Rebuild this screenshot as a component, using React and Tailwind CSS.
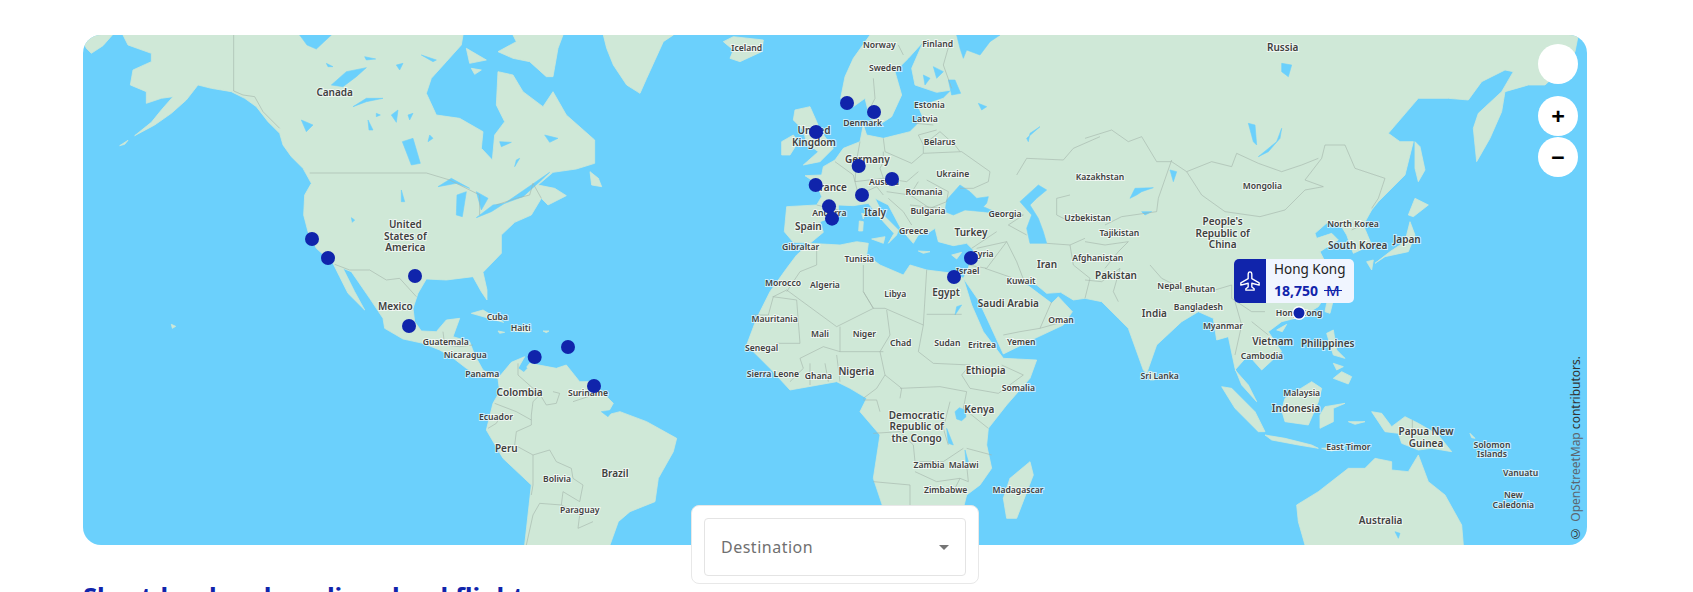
const LAND = "#cfe8d7";
const WATER = "#6bd0fc";
const LINE = "#a2b4a9";

// traced in 3x crop coordinates, each group has its own origin
const landA = [
  "0,18 20,0 88,0 60,32 25,55 10,40",
  "120,0 135,30 205,55 205,80 150,105 142,150 190,170 190,205 235,190 270,185 235,225 205,262 155,302 215,270 265,235 310,195 345,150 385,160 445,170 485,190 520,215 555,260 590,295 600,330 625,365 660,400 685,445 665,480 662,540 675,590 700,640 750,685 770,725 795,775 845,825 815,770 780,700 805,710 860,790 900,850 905,880 960,912 1020,925 1070,945 1105,965 1150,1000 1190,1025 1245,1030 1200,1005 1175,960 1160,920 1110,905 1130,850 1090,855 1060,890 1015,888 995,860 990,820 1005,775 1030,732 1090,735 1170,725 1195,770 1212,795 1212,765 1200,712 1255,655 1255,600 1295,562 1345,540 1375,490 1395,510 1450,482 1415,460 1365,450 1410,412 1480,402 1535,385 1535,315 1450,240 1410,170 1380,215 1320,170 1290,120 1245,110 1240,210 1265,260 1235,300 1228,375 1195,340 1200,290 1130,250 1060,240 1030,175 1045,130 1090,80 1135,30 1140,0",
  "1245,50 1300,20 1290,0 1440,0 1425,40 1410,125 1390,125 1340,80 1290,70",
  "1150,40 1210,75 1160,85",
  "1165,100 1195,105 1175,118",
  "1165,835 1200,825 1262,862 1225,852",
  "1285,878 1345,882 1340,892 1295,888",
  "1245,888 1265,892 1250,895",
  "1380,888 1398,888 1390,893",
  "265,868 278,874 268,880",
  "110,332 135,316 125,328",
  "1245,1030 1285,982 1325,965 1305,1000 1320,1010 1340,985 1420,1000 1450,990 1490,1040 1530,1040 1561,1075 1591,1105 1571,1140 1611,1130 1691,1160 1781,1210 1771,1250 1726,1330 1716,1400 1641,1430 1606,1460 1581,1530 1325,1530 1345,1350 1260,1270 1210,1185 1230,1105 1250,1070",
];

const waterA = [
  "650,0 745,0 700,42 672,30",
  "745,150 790,110 850,98 820,125 780,155",
  "810,215 850,190 900,190 850,200",
  "958,320 990,310 1012,385 985,390",
  "925,240 945,225 940,262",
  "855,255 870,285 858,285",
  "1065,455 1105,430 1160,460 1120,445",
  "1120,540 1122,480 1150,470 1138,545",
  "1180,470 1215,490 1195,525",
  "1180,548 1230,510 1265,505 1225,530",
  "1265,505 1345,450 1400,412 1370,440 1320,485",
  "1015,60 1060,75 1050,80",
  "845,65 878,72 850,75",
  "940,90 960,85 950,105",
  "1250,320 1285,322 1255,335",
  "1385,300 1425,310 1400,322",
  "1320,985 1332,1000 1322,1010",
  "730,85 750,95 735,95",
  "1555,1130 1591,1125 1575,1145",
  "655,255 690,270 670,290",
  "975,240 990,235 980,255",
  "880,235 892,240 880,245",
  "1040,300 1050,310 1035,320",
  "1300,375 1310,370 1295,395",
  "955,465 965,500 955,500",
  "805,548 815,555 808,562",
];

const bordersA = [
  "452,0 452,168 480,180 515,185 540,230 590,280",
  "680,414 1030,414 1100,435 1160,465 1190,480 1190,540",
  "1240,510 1300,490 1340,480 1350,445 1375,490",
  "755,688 800,705 860,705 910,735 950,730 1000,785",
  "1080,890 1085,930 1130,935 1170,930",
  "1305,985 1305,1020 1350,1060 1375,1075 1350,1100 1345,1140 1345,1170 1300,1190 1295,1230 1350,1260 1350,1350 1345,1380",
  "1375,1085 1390,1110 1420,1105 1430,1075 1410,1070",
  "1470,1100 1530,1080",
  "1235,1105 1300,1130 1345,1155",
  "1215,1180 1240,1165 1260,1130",
  "1350,1260 1400,1245 1420,1280 1465,1300 1470,1330 1500,1350 1490,1400 1440,1370 1435,1410 1370,1405 1350,1440 1330,1530",
  "1435,1410 1490,1440 1485,1480 1530,1460",
];

const landB = [
  "40,0 250,0 220,20 170,130 150,175 110,150 70,90 50,40",
  "400,20 430,5 520,15 515,50 450,80 420,70 430,45",
  "0,410 25,430 35,455 5,450",
  "575,360 575,320 610,300 625,320 600,360",
  "615,225 660,215 680,260 690,285 730,340 690,380 640,390 685,350 650,325 640,285 610,255",
  "840,0 790,70 765,125 752,190 790,215 825,190 840,250 870,268 905,245 935,180 915,110 955,70 1000,20 965,100 975,150 1040,172 1085,165 1060,190 985,215 1000,250 960,290 880,310 830,300 820,270 810,320 760,340 735,375 700,395 695,420 645,422 680,445 695,485 680,510 590,515 583,590 610,622 660,625 700,592 690,560 745,540 745,510 790,512 835,505 880,560 912,595 895,625 920,600 925,585 880,540 855,490 895,510 935,585 970,625 985,600 1020,590 1035,580 1045,620 1090,632 1130,625 1150,645 1135,700 1120,730 1165,795 1200,870 1240,957 1335,910 1420,870 1447,830 1405,785 1385,805 1345,775 1305,745 1340,750 1370,775 1412,772 1450,795 1485,790 1535,800 1585,850 1615,880 1660,1005 1670,1015 1700,930 1775,860 1825,830 1870,850 1880,915 1915,905 1935,1000 1955,1050 2000,1100 1975,1050 1935,1005 1975,960 2015,1005 2075,950 2035,890 2075,860 2135,845 2185,815 2235,740 2190,650 2245,615 2225,595 2180,610 2175,595 2215,560 2255,575 2270,600 2290,655 2345,630 2320,570 2345,525 2365,500 2445,420 2470,320 2430,320 2395,295 2485,190 2575,190 2635,195 2675,140 2745,105 2770,110 2735,170 2665,235 2650,280 2660,380 2700,310 2735,230 2745,170 2815,150 2865,150 2925,95 2955,50 2965,0",
  "660,625 750,630 800,620 835,625 830,660 870,690 940,720 960,690 1010,705 1090,715 1120,730 1145,810 1180,890 1240,970 1340,975 1320,1030 1250,1110 1195,1180 1190,1230 1205,1300 1170,1350 1130,1380 1120,1420 880,1420 850,1330 870,1200 810,1130 830,1090 780,1060 740,1040 600,1065 540,1000 470,930 500,850 540,770 590,700 620,660",
  "1320,1280 1330,1320 1280,1450 1250,1450 1240,1390 1260,1330",
  "808,558 820,560 818,588 806,588",
  "815,535 824,537 820,552",
  "845,612 885,605 880,625",
  "985,648 1020,650 1000,655",
  "1085,660 1115,652 1100,672",
];

const waterB = [
  "1100,0 1230,0 1200,20 1170,60 1130,45 1120,70 1110,40",
  "1065,530 1070,495 1110,450 1140,470 1160,490 1195,485 1190,505 1180,515 1225,535 1180,530 1125,525 1090,540",
  "1290,500 1345,450 1370,465 1340,490 1320,510 1345,550 1360,590 1370,625 1320,625 1310,580 1325,540",
  "1075,135 1095,135 1112,175 1085,180",
  "1030,95 1060,110 1040,130",
  "1000,120 1020,130 1005,150",
  "1165,205 1190,215 1175,225",
  "1310,310 1350,275 1320,295 1315,320",
  "1095,1130 1108,1118 1125,1125 1128,1145 1115,1157 1100,1152",
  "1070,1180 1090,1230 1075,1225",
  "1125,1245 1135,1280 1128,1285",
  "1100,815 1115,810 1095,840",
];

const bordersB = [
  "850,130 855,190 835,230",
  "940,60 925,30",
  "1080,20 1060,90 1085,160",
  "985,215 1040,220",
  "975,265 1030,270",
  "985,300 1040,285",
  "1000,330 1050,290 1095,330 1110,350",
  "1000,355 1115,350 1200,410 1195,440 1150,460 1110,460",
  "880,310 885,350 965,385 1000,355 1000,330 985,300",
  "810,320 800,375 795,440 880,430 870,400 880,380 880,350",
  "735,380 790,420 795,440 805,480",
  "680,510 745,525",
  "805,480 860,455 880,480",
  "880,430 950,440 985,410",
  "890,470 960,480 985,440",
  "960,480 1020,520 1070,500 1075,470 1010,435",
  "960,510 1050,520",
  "895,490 940,530 965,570",
  "1220,590 1145,640",
  "1160,640 1250,620 1190,700 1135,690",
  "1250,620 1280,680 1305,745",
  "1215,530 1300,540 1255,570 1310,600",
  "1370,625 1440,630 1485,610",
  "1185,700 1300,740",
  "1350,880 1385,800",
  "1240,900 1290,890 1350,880 1420,860",
  "1280,420 1310,370 1420,375 1450,340 1530,305",
  "1440,480 1400,490 1400,540 1440,560",
  "1440,630 1450,690 1500,730 1485,790",
  "680,640 680,690 630,710 590,770",
  "590,765 550,785 535,840 490,840",
  "548,785 620,795 630,925 560,925",
  "590,765 740,875 850,820 820,770 820,690",
  "820,770 850,820 885,820 1000,870 1010,705",
  "1010,838 1115,838",
  "890,825 900,900 870,950 885,1020",
  "1000,870 985,950 1030,985 1140,990",
  "750,950 880,950",
  "750,875 750,950 700,935 630,970 640,1000 600,1040",
  "740,960 750,1040",
  "660,985 660,1050",
  "705,985 715,1040",
  "885,1020 860,1060 820,1090",
  "885,1020 935,1060 930,1090",
  "930,1060 1050,1055 1130,1070",
  "1080,1100 1060,1180 1075,1230",
  "1130,1070 1120,1120 1195,1180",
  "1140,990 1115,1020 1140,1060 1225,1075 1300,1020 1235,990",
  "820,1095 860,1095 870,1130",
  "850,1195 930,1190 970,1230 975,1280 1060,1280 1120,1240",
  "850,1340 960,1350 960,1410",
  "1130,1290 1135,1340 1110,1330 1090,1370",
  "975,1310 1040,1340 1110,1330",
  "1205,1260 1130,1240",
];

const landC = [
  "725,805 745,795 735,835 720,830",
  "575,885 605,868 592,890",
  "725,895 745,885 755,945 780,970 745,960",
  "770,1010 800,1025 790,1047 745,1030",
  "745,985 775,995 755,1005",
  "410,1055 440,1060 510,1130 540,1190 520,1190 450,1120",
  "540,1200 600,1210 680,1230 700,1240 640,1230 560,1215",
  "600,1090 680,1040 710,1060 700,1100 670,1170 600,1160 590,1125",
  "720,1115 780,1105 745,1120 745,1160 705,1180 705,1140",
  "790,1160 840,1160 810,1168",
  "710,1240 780,1235 740,1248",
  "860,1130 890,1135 920,1175 960,1145 1000,1165 1060,1200 1100,1250 1040,1240 1000,1245 950,1225 940,1195 900,1190",
  "635,1410 700,1370 790,1300 840,1300 870,1270 920,1280 920,1305 970,1310 1000,1260 1030,1340 1080,1380 1130,1470 1135,1530 660,1530 640,1460",
  "1155,1195 1170,1210 1160,1208",
  "190,1010 205,1012 208,1035 195,1035",
  "990,320 1005,335 1020,405 1000,440 990,400",
  "970,540 990,490 1030,510 985,545",
  "975,560 990,600 970,650 900,665 870,685 915,650 960,620",
  "845,680 865,675 860,705",
];

const waterC = [
  "135,490 150,460 205,458 170,470 155,480",
  "520,365 575,320 590,280 585,310 550,350",
  "490,265 510,270 515,330 505,320",
  "590,85 620,90 610,125 590,110",
  "255,405 275,410 265,440",
  "170,530 200,530 180,540",
  "930,1490 945,1495 940,1510",
];

const bordersC = [
  "0,310 80,285 130,320 170,305 215,380 260,380 305,410",
  "305,410 350,480 420,530 525,545 600,525 660,465 715,455 660,435 710,370 720,330 780,330 810,400 900,430 880,490 860,520",
  "305,410 380,380 440,395 455,355 520,385 590,410 650,390 700,370",
  "260,375 220,490 215,530 110,545 60,570",
  "0,620 60,630 130,620 100,650 60,700",
  "0,735 50,740 105,700 85,770 100,800",
  "195,690 230,730 290,760 300,775",
  "390,765 440,750 440,790 500,830 540,830",
  "500,860 550,900",
  "450,800 470,870 450,960",
  "982,1155 982,1200",
  "800,585 850,560",
];

const labelsA = [
  ["Canada", 755, 173, 1], ["United", 967, 569, 1], ["States of", 967, 603, 1], ["America", 967, 638, 1],
  ["Mexico", 937, 814, 1], ["Cuba", 1243, 846], ["Haiti", 1313, 880], ["Guatemala", 1088, 922],
  ["Nicaragua", 1147, 960], ["Panama", 1198, 1017], ["Colombia", 1310, 1071, 1], ["Ecuador", 1239, 1145],
  ["Peru", 1270, 1240, 1], ["Bolivia", 1422, 1331], ["Paraguay", 1490, 1426], ["Suriname", 1515, 1073],
];

const labelsB = [
  ["Brazil", 75, 1314, 1], ["Iceland", 470, 40], ["Norway", 868, 30], ["Finland", 1043, 27], ["Sweden", 886, 98],
  ["Estonia", 1018, 211], ["Latvia", 1005, 251], ["Denmark", 818, 264], ["United", 672, 287, 1], ["Kingdom", 672, 321, 1],
  ["Belarus", 1049, 320], ["Germany", 832, 373, 1], ["Ukraine", 1088, 418], ["Austria", 882, 440], ["France", 722, 456, 1],
  ["Romania", 1002, 472], ["Italy", 855, 531, 1], ["Bulgaria", 1014, 529], ["Andorra", 718, 533], ["Spain", 655, 575, 1],
  ["Greece", 971, 589], ["Georgia", 1245, 537], ["Turkey", 1143, 591, 1], ["Gibraltar", 632, 637], ["Tunisia", 808, 671],
  ["Syria", 1180, 656], ["Israel", 1133, 707], ["Libya", 916, 777], ["Morocco", 579, 744], ["Algeria", 705, 751],
  ["Egypt", 1068, 773, 1], ["Saudi Arabia", 1255, 806, 1], ["Kuwait", 1293, 738], ["Iran", 1371, 688, 1], ["Oman", 1413, 855],
  ["Mauritania", 554, 851], ["Mali", 690, 897], ["Niger", 823, 898], ["Chad", 932, 925], ["Sudan", 1072, 925],
  ["Eritrea", 1176, 930], ["Yemen", 1294, 922], ["Senegal", 515, 940], ["Sierra Leone", 549, 1016], ["Ghana", 685, 1022],
  ["Nigeria", 799, 1009, 1], ["Ethiopia", 1187, 1007, 1], ["Somalia", 1285, 1058], ["Kenya", 1168, 1122, 1],
  ["Democratic", 980, 1141, 1], ["Republic of", 980, 1175, 1], ["the Congo", 980, 1209, 1], ["Zambia", 1017, 1289],
  ["Malawi", 1121, 1290], ["Zimbabwe", 1067, 1366], ["Madagascar", 1284, 1365],
];

const labelsC = [
  ["Russia", 593, 38, 1], ["Kazakhstan", 45, 425], ["Uzbekistan", 8, 550], ["Tajikistan", 103, 593], ["Afghanistan", 38, 669],
  ["Pakistan", 93, 720, 1], ["Mongolia", 532, 452], ["People's", 413, 560, 1], ["Republic of", 413, 594, 1], ["China", 413, 628, 1],
  ["North Korea", 804, 568], ["South Korea", 818, 631, 1], ["Japan", 966, 614, 1], ["Nepal", 254, 752], ["Bhutan", 345, 763],
  ["India", 208, 834, 1], ["Bangladesh", 340, 817], ["Myanmar", 414, 873], ["Vietnam", 563, 918, 1], ["Philippines", 728, 925, 1],
  ["Cambodia", 531, 964], ["Sri Lanka", 224, 1023], ["Hong Kong", 642, 835], ["Malaysia", 650, 1074], ["Indonesia", 633, 1121, 1],
  ["East Timor", 790, 1235], ["Papua New", 1023, 1190, 1], ["Guinea", 1023, 1224, 1], ["Solomon", 1221, 1229], ["Islands", 1221, 1258],
  ["Vanuatu", 1307, 1315], ["New", 1285, 1381], ["Caledonia", 1285, 1410], ["Australia", 887, 1457, 1],
];

const pins = [
  [83, 687, 612], [83, 735, 669], [83, 996, 723], [83, 978, 873], [83, 1355, 966], [83, 1455, 936],
  [590, 12, 1053], [590, 771, 204], [590, 852, 231], [590, 678, 291], [590, 806, 393], [590, 906, 432],
  [590, 677, 450], [590, 816, 480], [590, 717, 514], [590, 726, 551], [590, 1143, 669], [590, 1092, 726],
];

function Layer({ x, land, water, borders }) {
  return (
    <g transform={`translate(${x},35) scale(0.33333)`}>
      {land.map((p, i) => (
        <polygon key={i} points={p} fill={LAND} stroke={LAND} strokeWidth="0.8" strokeLinejoin="round" vectorEffect="non-scaling-stroke" />
      ))}
      {water.map((p, i) => (
        <polygon key={i} points={p} fill={WATER} stroke={WATER} strokeWidth="0.6" strokeLinejoin="round" vectorEffect="non-scaling-stroke" />
      ))}
      {borders.map((p, i) => (
        <polyline key={i} points={p} fill="none" stroke={LINE} strokeWidth="0.6" vectorEffect="non-scaling-stroke" />
      ))}
    </g>
  );
}

function Labels({ x, items }) {
  return items.map(([text, lx, ly, big]) => (
    <text
      key={text + lx}
      x={x + lx / 3}
      y={35 + ly / 3 + (big ? 3.5 : 3)}
      textAnchor="middle"
      fontSize={big ? 10 : 8.6}
      fontWeight="600"
      fill="#404040"
      stroke="#ffffff"
      strokeOpacity="0.65"
      strokeWidth="2"
      paintOrder="stroke"
      fontFamily="'Noto Sans', sans-serif"
    >
      {text}
    </text>
  ));
}

function WorldMap() {
  return (
    <svg className="block w-full h-full" viewBox="83 35 1504 510">
      <Layer x={83} land={landA} water={waterA} borders={bordersA} />
      <Layer x={590} land={landB} water={waterB} borders={bordersB} />
      <Layer x={1085} land={landC} water={waterC} borders={bordersC} />
      <Labels x={83} items={labelsA} />
      <Labels x={590} items={labelsB} />
      <Labels x={1085} items={labelsC} />
      {pins.map(([x0, x, y], i) => (
        <circle key={i} cx={x0 + x / 3} cy={35 + y / 3} r="7" fill="#1024ab" />
      ))}
      <circle cx={1299} cy={313} r="6.2" fill="#1024ab" stroke="#ffffff" strokeWidth="1.4" />
    </svg>
  );
}

function PlaneIcon() {
  return (
    <svg width="22" height="22" viewBox="0 0 24 24" fill="none" stroke="white" strokeWidth="1.5" strokeLinejoin="round">
      <path d="M12 2c1.2 0 2 1.5 2 3v4.500l8 4.500v2.500l-8-2v4l2.500 2v1.500h-9V20.500l2.500-2v-4l-8 2V14l8-4.500V5c0-1.500.8-3 2-3z" />
    </svg>
  );
}

export default function App() {
  return (
    <div className="w-[1693px] h-[592px] overflow-hidden bg-white font-['Noto_Sans',sans-serif]">
      <div className="relative ml-[83px] mt-[35px] w-[1504px] h-[510px] inline-block overflow-hidden rounded-[18px] bg-[#6bd0fc] align-top">
        <WorldMap />

        <div className="absolute top-[9px] right-[9px] flex flex-col">
          <button className="w-10 h-10 rounded-full bg-white mb-3"></button>
          <button className="w-10 h-10 rounded-full bg-white mb-px flex items-center justify-center text-[24px] leading-none font-bold text-black">+</button>
          <button className="w-10 h-10 rounded-full bg-white flex items-center justify-center text-[24px] leading-none font-bold text-black">−</button>
        </div>

        <div className="absolute left-[1151px] top-[224px] flex h-11 w-[120px] overflow-hidden rounded-[5px] bg-[#f0f5ff]">
          <div className="flex w-8 items-center justify-center bg-[#1024ab]">
            <PlaneIcon />
          </div>
          <div className="pl-2">
            <div className="text-[13.500px] leading-[21px] text-[#222222]">Hong Kong</div>
            <div className="flex items-center text-[14px] leading-[21px] font-bold text-[#1024ab]">
              18,750
              <span className="relative ml-2 font-medium text-[15px]">
                M
                <span className="absolute left-[-2px] right-[-2px] top-[10px] h-px bg-[#1024ab]"></span>
              </span>
            </div>
          </div>
        </div>

        <div className="absolute bottom-[3px] right-[3px] rotate-180 text-[12px] leading-4 text-[#333333] [writing-mode:vertical-rl]">
          © <span className="text-[#5b6670]">OpenStreetMap</span> contributors.
        </div>
      </div>

      <div className="relative z-10 ml-[691px] -mt-10 w-[288px] h-[79px] rounded-lg border border-[#e8e8e8] bg-white p-3">
        <div className="flex h-[58px] items-center justify-between rounded border border-[#e4e4e4] pl-4 pr-4">
          <span className="text-[16px] tracking-[0.5px] text-[#707070]">Destination</span>
          <span className="h-0 w-0 border-x-[5px] border-t-[5px] border-x-transparent border-t-[#757575]"></span>
        </div>
      </div>

      <h2 className="ml-[83px] -mt-[5px] text-[25.600px] leading-9 font-bold whitespace-nowrap text-[#1024ab]">Short-haul and medium-haul flights</h2>
    </div>
  );
}
